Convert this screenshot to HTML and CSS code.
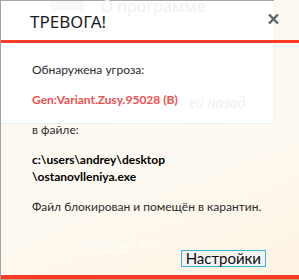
FILE: index.html
```html
<!DOCTYPE html>
<html lang="ru">
<head>
<meta charset="utf-8">
<link rel="stylesheet" href="styles.css">
</head>
<body>
<div class="screen">
  <div class="behind">
    <div class="behind-tab"></div>
    <div class="behind-title">О программе</div>
    <div class="behind-note">ей назад</div>
  </div>
  <div class="behind-bottom">Windows 10</div>
  <div class="dialog">
    <div class="header">
      <h1 class="title">ТРЕВОГА!</h1>
      <svg class="close" width="11" height="10" viewBox="0 0 11 10"><path d="M1 0.5 L10 9.5 M10 0.5 L1 9.5" stroke="#5d6870" stroke-width="2.4" fill="none"/></svg>
    </div>
    <div class="bar"></div>
    <div class="content">
      <p class="line">Обнаружена угроза:</p>
      <p class="line threat">Gen:Variant.Zusy.95028 (B)</p>
      <p class="line">в файле:</p>
      <p class="line path">c:\users\andrey\desktop<br>\ostanovlleniya.exe</p>
      <p class="line">Файл блокирован и помещён в карантин.</p>
      <div class="actions">
        <button class="btn">Настройки</button>
      </div>
    </div>
    <div class="bar bottom-bar"></div>
  </div>
</div>
</body>
</html>
```

FILE: styles.css
```css
html, body {
  margin: 0;
  padding: 0;
}
body {
  width: 299px;
  height: 280px;
  overflow: hidden;
  font-family: "Lato", "Noto Sans", sans-serif;
}
.screen {
  position: relative;
  width: 299px;
  height: 280px;
  background: linear-gradient(160deg, #fdf7ec 0%, #fefaf3 55%, #fdf3e2 100%);
  border-left: 1px solid #a3a3a3;
  box-sizing: border-box;
}
.behind {
  position: absolute;
  left: 0;
  top: 0;
  width: 273px;
  height: 123px;
  background: #ffffff;
  border-top: 1px solid #a8a8a8;
  box-sizing: border-box;
  box-shadow: 0 1px 0 #e8f2ec, 1px 0 0 #f6efe4;
}
.behind-tab {
  position: absolute;
  left: 50px;
  top: 0;
  width: 33px;
  height: 10px;
  background: #f9f9f9;
}
.behind-title {
  position: absolute;
  left: 100px;
  top: -6px;
  font-family: "Noto Sans", sans-serif;
  font-size: 16px;
  color: #f1f1f1;
}
.behind-note {
  position: absolute;
  left: 188px;
  top: 92px;
  font-family: "Noto Sans", sans-serif;
  font-size: 14px;
  font-style: italic;
  color: #f0f0f0;
}
.behind-bottom {
  position: absolute;
  left: 75px;
  top: 236px;
  font-family: "Noto Sans", sans-serif;
  font-size: 14px;
  color: rgba(255, 255, 255, 0.7);
}
.dialog {
  position: relative;
  display: flex;
  flex-direction: column;
  height: 280px;
}
.header {
  height: 40px;
  display: flex;
  align-items: center;
  justify-content: space-between;
  padding: 0 20px 0 29px;
}
.title {
  margin: 0;
  font-family: "Noto Sans", sans-serif;
  font-size: 17px;
  font-weight: 400;
  color: #1b1b1b;
  padding-top: 2px;
}
.close {
  display: block;
  margin-top: -2px;
}
.bar {
  height: 3px;
  background: #fb3b28;
}
.content {
  flex: 1;
  padding: 18px 0 0 31px;
}
.line {
  margin: 0 0 13px;
  font-size: 12px;
  line-height: 17px;
  color: #2c2c2c;
}
.threat {
  color: #f04e4e;
  font-weight: 700;
}
.path {
  color: #000;
  font-weight: 700;
}
.actions {
  display: flex;
  justify-content: flex-end;
  padding: 22px 33px 0 0;
}
.btn {
  font-family: "Lato", "Noto Sans", sans-serif;
  font-size: 15px;
  line-height: 15px;
  height: 17px;
  padding: 0 4px;
  border: 1px solid #3db3d3;
  background: #f3f3f3;
  color: #111;
}
.bottom-bar {
  height: 4px;
  margin-bottom: 1px;
  background: #fb3b28;
  box-shadow: 0 1px 0 #c8a878;
}
```
